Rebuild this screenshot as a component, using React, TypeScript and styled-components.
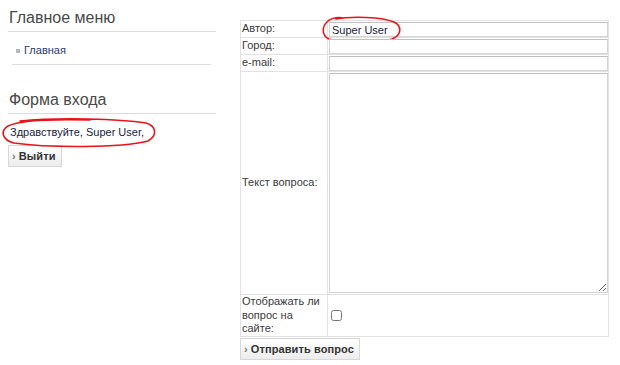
import React from "react";
import styled, { createGlobalStyle } from "styled-components";

const GlobalStyle = createGlobalStyle`
  html, body {
    margin: 0;
    padding: 0;
    background: #ffffff;
    font-family: "Liberation Sans", Arial, sans-serif;
  }
`;

const Page = styled.div`
  display: flex;
  gap: 24px;
  padding: 0 0 0 8px;
  width: 620px;
  height: 365px;
  box-sizing: border-box;
  overflow: hidden;
`;

const Sidebar = styled.div`
  width: 208px;
  padding-top: 8px;
`;

const Module = styled.div<{ $gap?: number }>`
  margin-bottom: ${({ $gap }) => $gap ?? 0}px;
`;

const ModuleTitle = styled.h3`
  margin: 0;
  padding: 0 0 4px 1px;
  font-weight: normal;
  font-size: 16px;
  line-height: 19px;
  color: #4a4a4a;
  border-bottom: 1px solid #dcdcdc;
`;

const MenuList = styled.ul`
  list-style: none;
  margin: 0 5px 0 4px;
  padding: 12px 0 7px 0;
  border-bottom: 1px solid #dcdcdc;
`;

const MenuItem = styled.li`
  display: flex;
  align-items: center;
  gap: 4px;
  padding-left: 4px;
  font-size: 11px;
  line-height: 13px;
  color: #2b3a6b;
  &::before {
    content: "";
    width: 4px;
    height: 4px;
    background: #b8b8b8;
  }
`;

const Greeting = styled.div`
  position: relative;
  margin: 11px 0 0 2px;
  font-size: 11px;
  line-height: 14px;
  color: #1a1a40;
`;

const Annotation = styled.svg`
  position: absolute;
  pointer-events: none;
  overflow: visible;
`;

const ArrowButton = styled.button`
  display: inline-flex;
  align-items: center;
  gap: 3px;
  height: 22px;
  padding: 0 5px 0 3px;
  border: 1px solid #d8d8d8;
  background: linear-gradient(#ffffff, #ececec);
  font-family: "Liberation Sans", Arial, sans-serif;
  font-weight: bold;
  font-size: 11px;
  letter-spacing: 0.1px;
  color: #333;
  cursor: pointer;
  &::before {
    content: "›";
    font-size: 11px;
    color: #777;
  }
`;

const ButtonRow = styled.div<{ $top: number }>`
  margin-top: ${({ $top }) => $top}px;
`;

const Main = styled.div`
  padding-top: 20px;
  width: 369px;
`;

const FormTable = styled.table`
  border-collapse: collapse;
  width: 369px;
  font-size: 11px;
  color: #333;
  td {
    border: 1px solid #e2e2e2;
    padding: 0;
    vertical-align: middle;
  }
`;

const LabelCell = styled.td`
  width: 86px;
  padding: 0 1px !important;
  line-height: 13.5px;
  color: #3a3a3a;
`;

const FieldCell = styled.td`
  position: relative;
  padding: 1px 0 0 1px !important;
`;

const TextInput = styled.input`
  display: block;
  box-sizing: border-box;
  width: 279px;
  height: 15px;
  margin: 0;
  padding: 0 2px;
  border: 1px solid #d4d4d4;
  border-top-color: #c0c0c0;
  font-family: "Liberation Sans", Arial, sans-serif;
  font-size: 11px;
  color: #1a1a40;
  outline: none;
`;

const TextArea = styled.textarea`
  display: block;
  box-sizing: border-box;
  width: 279px;
  height: 220px;
  margin: 0 0 1px 0;
  border: 1px solid #d4d4d4;
  border-top-color: #c0c0c0;
  outline: none;
`;

const Check = styled.input`
  width: 11px;
  height: 11px;
  margin: 0 0 0 2px;
  display: block;
`;

const Ellipse: React.FC<{ w: number; h: number; left: number; top: number; d: string }> = ({ w, h, left, top, d }) => (
  <Annotation width={w} height={h} style={{ left, top }} viewBox={`0 0 ${w} ${h}`}>
    <path d={d} fill="none" stroke="#e8141a" strokeWidth="1.6" strokeLinecap="round" />
  </Annotation>
);

const App: React.FC = () => {
  return (
    <>
      <GlobalStyle />
      <Page>
        <Sidebar>
          <Module $gap={25}>
            <ModuleTitle>Главное меню</ModuleTitle>
            <MenuList>
              <MenuItem>Главная</MenuItem>
            </MenuList>
          </Module>
          <Module>
            <ModuleTitle>Форма входа</ModuleTitle>
            <Greeting>
              Здравствуйте, Super User,
              <Ellipse
                w={156}
                h={32}
                left={-10}
                top={-8}
                d="M20 4 C60 0 120 2 146 6 C156 9 158 18 148 24 C120 31 50 31 14 26 C2 23 0 14 8 9 C18 4 50 2 90 3"
              />
            </Greeting>
            <ButtonRow $top={6}>
              <ArrowButton>Выйти</ArrowButton>
            </ButtonRow>
          </Module>
        </Sidebar>
        <Main>
          <FormTable>
            <tbody>
              <tr>
                <LabelCell>Автор:</LabelCell>
                <FieldCell>
                  <TextInput defaultValue="Super User" />
                  <Ellipse
                    w={80}
                    h={28}
                    left={-6}
                    top={-4}
                    d="M14 2 C30 -1 60 0 72 5 C80 9 80 18 70 22 C55 27 20 26 7 22 C-1 18 0 9 6 4 C10 1 16 0 22 1"
                  />
                </FieldCell>
              </tr>
              <tr>
                <LabelCell>Город:</LabelCell>
                <FieldCell>
                  <TextInput />
                </FieldCell>
              </tr>
              <tr>
                <LabelCell>e-mail:</LabelCell>
                <FieldCell>
                  <TextInput />
                </FieldCell>
              </tr>
              <tr>
                <LabelCell>Текст вопроса:</LabelCell>
                <FieldCell>
                  <TextArea />
                </FieldCell>
              </tr>
              <tr>
                <LabelCell>Отображать ли вопрос на сайте:</LabelCell>
                <FieldCell>
                  <Check type="checkbox" />
                </FieldCell>
              </tr>
            </tbody>
          </FormTable>
          <ButtonRow $top={1}>
            <ArrowButton>Отправить вопрос</ArrowButton>
          </ButtonRow>
        </Main>
      </Page>
    </>
  );
};

export default App;
